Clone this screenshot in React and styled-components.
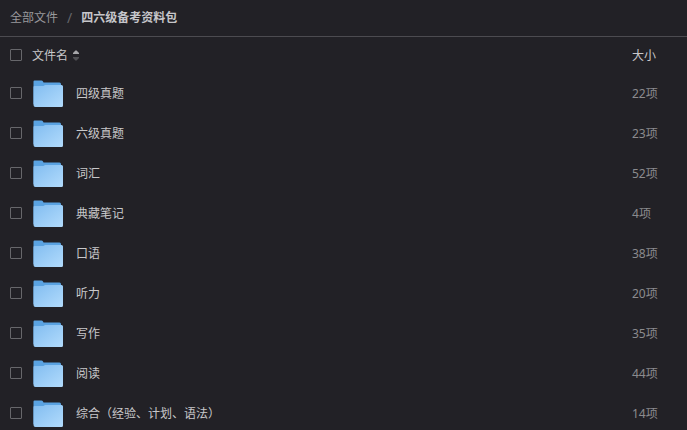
import React, { useState } from 'react';
import styled, { createGlobalStyle } from 'styled-components';

const GlobalStyle = createGlobalStyle`
  * {
    box-sizing: border-box;
  }

  body {
    margin: 0;
    background: #222126;
    color: #c8c8ca;
    font-family: 'Noto Sans', 'Noto Sans CJK SC', sans-serif;
    font-size: 12px;
    line-height: 16px;
  }
`;

const Page = styled.div`
  display: flex;
  flex-direction: column;
  height: 100vh;
`;

const Breadcrumb = styled.nav`
  display: flex;
  align-items: center;
  flex-shrink: 0;
  gap: 9px;
  height: 37px;
  padding: 0 10px;
  border-bottom: 1px solid #4c4b50;
`;

const CrumbLink = styled.a`
  color: #98989b;
  text-decoration: none;

  &:hover {
    color: #cfcfd1;
  }
`;

const Separator = styled.span`
  color: #65656a;
  font-size: 14px;
`;

const Current = styled.span`
  color: #c6c6ca;
  font-weight: bold;
`;

const Scroller = styled.div`
  flex: 1;
  overflow-y: auto;
  scrollbar-width: none;
`;

const Table = styled.table`
  width: 100%;
  table-layout: fixed;
  border-collapse: collapse;
`;

const HeadRow = styled.tr`
  height: 36px;
`;

const Row = styled.tr`
  height: 40px;

  &:hover {
    background: #2b2a30;
  }
`;

const HeadCell = styled.th`
  width: ${({ $width }) => $width || 'auto'};
  padding: 2px 0 0;
  font-weight: normal;
  text-align: left;
`;

const CheckHead = styled(HeadCell)`
  padding: 0 0 0 10px;
`;

const Cell = styled.td`
  padding: 2px 0 0;
`;

const CheckCell = styled(Cell)`
  padding: 0 0 0 10px;
`;

const SizeCell = styled(Cell)`
  color: #8b8b8e;
`;

const Checkbox = styled.input`
  display: block;
  appearance: none;
  width: 12px;
  height: 12px;
  margin: 0;
  border: 1px solid #67676b;
  border-radius: 1px;

  &:checked {
    border-color: #5aa9ec;
    background: #5aa9ec;
  }
`;

const SortButton = styled.button`
  display: flex;
  align-items: center;
  gap: 4px;
  padding: 0;
  border: 0;
  background: none;
  color: inherit;
  font: inherit;
`;

const FileName = styled.label`
  display: flex;
  align-items: center;
  gap: 12px;
`;

const files = [
  { name: '四级真题', count: 22 },
  { name: '六级真题', count: 23 },
  { name: '词汇', count: 52 },
  { name: '典藏笔记', count: 4 },
  { name: '口语', count: 38 },
  { name: '听力', count: 20 },
  { name: '写作', count: 35 },
  { name: '阅读', count: 44 },
  { name: '综合（经验、计划、语法）', count: 14 },
];

const SortIcon = () => (
  <svg width="8" height="12" viewBox="0 0 8 12" aria-hidden="true">
    <path d="M1 4V3L3.4 0.5H4.6L7 3V4Z" fill="#a6a6a9" />
    <path d="M1 7V8L3.4 10.5H4.6L7 8V7Z" fill="#505054" />
  </svg>
);

const FolderIcon = () => (
  <svg width="32" height="28" viewBox="0 0 32 28" aria-hidden="true">
    <defs>
      <linearGradient id="folder-front" x1="0" y1="0" x2="1" y2="1">
        <stop offset="0" stopColor="#82bdf0" />
        <stop offset="1" stopColor="#b2dbfc" />
      </linearGradient>
    </defs>
    <path
      d="M1.5 1.5Q1.5 0.5 2.5 0.5H9.5Q10.5 0.5 11 1.5L11.5 2.5H27.5Q29 2.5 29 4V24H1.5Z"
      fill="#5aa3e2"
    />
    <path
      d="M1.5 7Q1.5 6 2.5 6H11.5L13 5H29.5Q31 5 31 6.5V25.5Q31 27 29.5 27H3.5Q1.5 27 1.5 25Z"
      fill="url(#folder-front)"
    />
  </svg>
);

// Plain list view of one folder, with a checkbox for each entry
const App = () => {
  const [selected, setSelected] = useState([]);
  const [reversed, setReversed] = useState(false);
  const rows = reversed ? [...files].reverse() : files;

  const toggle = (name) =>
    setSelected(
      selected.includes(name)
        ? selected.filter((item) => item !== name)
        : [...selected, name]
    );

  return (
    <Page>
      <GlobalStyle />
      <Breadcrumb>
        <CrumbLink href="#">全部文件</CrumbLink>
        <Separator>/</Separator>
        <Current>四六级备考资料包</Current>
      </Breadcrumb>
      <Scroller>
        <Table>
          <thead>
            <HeadRow>
              <CheckHead $width="32px">
                <Checkbox
                  type="checkbox"
                  aria-label="全选"
                  checked={selected.length === files.length}
                  onChange={(e) =>
                    setSelected(e.target.checked ? files.map((f) => f.name) : [])
                  }
                />
              </CheckHead>
              <HeadCell>
                <SortButton type="button" onClick={() => setReversed(!reversed)}>
                  文件名
                  <SortIcon />
                </SortButton>
              </HeadCell>
              <HeadCell $width="55px">大小</HeadCell>
            </HeadRow>
          </thead>
          <tbody>
            {rows.map(({ name, count }) => (
              <Row key={name}>
                <CheckCell>
                  <Checkbox
                    type="checkbox"
                    id={name}
                    checked={selected.includes(name)}
                    onChange={() => toggle(name)}
                  />
                </CheckCell>
                <Cell>
                  <FileName htmlFor={name}>
                    <FolderIcon />
                    {name}
                  </FileName>
                </Cell>
                <SizeCell>{count}项</SizeCell>
              </Row>
            ))}
          </tbody>
        </Table>
      </Scroller>
    </Page>
  );
};

export default App;
